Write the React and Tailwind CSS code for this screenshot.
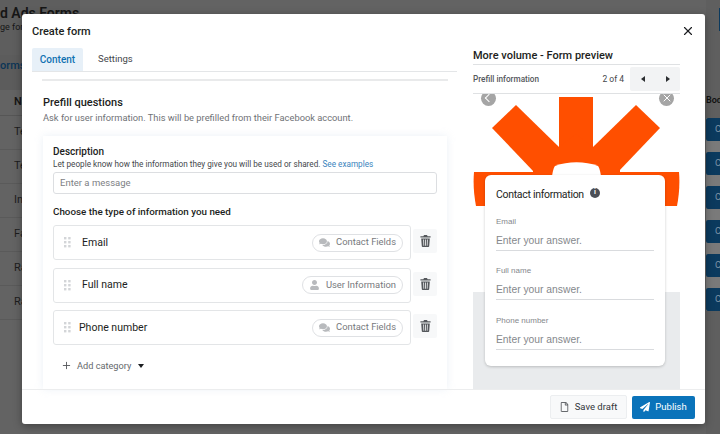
import React from "react";
import { FaComments, FaPaperPlane, FaRegFile, FaUser } from "react-icons/fa";
import { FiPlus, FiX } from "react-icons/fi";

const fields = [
  { name: "Email", tag: "Contact Fields", icon: "chat", pad: "pl-[11px]" },
  { name: "Full name", tag: "User Information", icon: "user", pad: "pl-[11px]" },
  { name: "Phone number", tag: "Contact Fields", icon: "chat", pad: "pl-[8px]" },
];

const previewFields = ["Email", "Full name", "Phone number"];
const tableRows = ["Te", "Te", "In", "Fa", "Ra", "Ra"];

function DragHandle() {
  return (
    <svg width="7" height="11" viewBox="0 0 7 11" fill="#d3d5d8">
      <rect x="0" y="0" width="2.4" height="2.4" />
      <rect x="4.2" y="0" width="2.4" height="2.4" />
      <rect x="0" y="4" width="2.4" height="2.4" />
      <rect x="4.2" y="4" width="2.4" height="2.4" />
      <rect x="0" y="8" width="2.4" height="2.4" />
      <rect x="4.2" y="8" width="2.4" height="2.4" />
    </svg>
  );
}

function TrashIcon() {
  return (
    <svg width="11" height="12" viewBox="0 0 11 12" fill="#55585c">
      <path d="M4 0 H7 L7.6 1.2 H10.6 V2.6 H0.4 V1.2 H3.4 Z" />
      <path d="M1.2 3.4 H9.8 L9.2 11.2 C9.2 11.7 8.8 12 8.4 12 H2.6 C2.2 12 1.8 11.7 1.8 11.2 Z M3.2 4.6 L3.5 10.8 H4.2 L4 4.6 Z M5.1 4.6 V10.8 H5.9 V4.6 Z M7 4.6 L6.8 10.8 H7.5 L7.8 4.6 Z" fillRule="evenodd" />
    </svg>
  );
}

function FieldRow({ name, tag, icon, pad }) {
  return (
    <div className="flex items-start">
      <div className="flex h-[35px] w-[358px] shrink-0 items-center rounded-[3px] border border-[#e3e5e7] pl-[10px] pr-[7px]">
        <DragHandle />
        <span className={`${pad} text-[10.5px] text-[#1c1e21]`}>{name}</span>
        <div className="ml-auto flex h-[18px] items-center gap-[6px] rounded-full border border-[#dfe1e4] px-[6px] text-[9.4px] text-[#77797d]">
          {icon === "chat" ? (
            <FaComments className="h-[11px] w-[11px] text-[#b8babd]" />
          ) : (
            <FaUser className="h-[10px] w-[11px] text-[#b8babd]" />
          )}
          {tag}
        </div>
      </div>
      <div className="ml-[2px] mt-[4px] flex h-[24px] w-[24px] shrink-0 items-center justify-center rounded-[2px] bg-[#f7f8f9]">
        <TrashIcon />
      </div>
    </div>
  );
}

function Preview() {
  return (
    <div className="relative h-[296px] overflow-hidden bg-[#e9ebed]">
      <div className="h-[198px] bg-white" />
      <svg className="absolute left-0 top-0" width="207" height="198" viewBox="0 0 207 198">
        <g fill="#ff4f00">
          <rect x="86" y="3" width="34" height="80" />
          <polygon points="43,11 19,34 61,78 86,53" />
          <polygon points="163,11 187,34 145,78 120,53" />
          <polygon points="60,78 147,78 147,53 120,53 103,40 86,53 60,53" />
          <path d="M1 78 H206 C207 90 206 102 204 112 H3 C1 102 0 90 1 78 Z" />
        </g>
        <path d="M79 82 C80 76 81 73 82 72 C95 67 112 67 125 72 C126 73 127 76 128 82 Z" fill="#fff" />
      </svg>
      <div className="absolute -top-[3px] left-[8px] flex h-[15px] w-[15px] items-center justify-center rounded-full bg-[#a5a5a5]">
        <span className="h-[6px] w-[6px] rotate-45 border-b border-l border-white" />
      </div>
      <div className="absolute -top-[3px] right-[6px] flex h-[15px] w-[15px] items-center justify-center rounded-full bg-[#a5a5a5]">
        <FiX className="h-[12px] w-[12px] text-white" />
      </div>
      <div className="absolute left-[12px] top-[81px] h-[191px] w-[180px] rounded-[6px] bg-white px-[11px] pt-[13px] shadow-[0_1px_3px_rgba(0,0,0,0.2)]">
        <div className="flex items-start gap-[6px]">
          <span className="text-[10.5px] leading-[14px] tracking-[-0.3px] text-[#1c1e21]">Contact information</span>
          <span className="flex h-[10px] w-[10px] items-center justify-center rounded-full bg-[#4b4f56] text-[7px] font-bold leading-none text-white">
            i
          </span>
        </div>
        <div className="mt-[15px] flex flex-col gap-[15.5px]">
          {previewFields.map((label) => (
            <div key={label}>
              <div className="font-['Liberation_Sans',sans-serif] text-[8px] leading-[10px] text-[#85888d]">{label}</div>
              <div className="mt-[7px] h-[17px] border-b border-[#d9dbde] font-['Liberation_Sans',sans-serif] text-[10.3px] leading-[14px] text-[#85888c]">
                Enter your answer.
              </div>
            </div>
          ))}
        </div>
      </div>
    </div>
  );
}

function Modal() {
  return (
    <div className="absolute left-[22px] top-[14px] flex h-[410px] w-[683px] flex-col overflow-hidden rounded-[3px] bg-white shadow-[0_2px_8px_rgba(0,0,0,0.35)]">
      <FiX className="absolute right-[10px] top-[10px] h-[14px] w-[14px] text-[#1c1e21]" />
      <div className="flex min-h-0 flex-1">
        <div className="flex w-[435px] flex-col pl-[10px]">
          <h1 className="pt-[11px] text-[11px] font-medium leading-[13px] text-[#1c1e21]">Create form</h1>
          <div className="mt-[10px] flex h-[24px] items-stretch border-b border-[#e4e6e8]">
            <div className="flex w-[51px] items-center justify-center rounded-t-[2px] bg-[#e7f0f8] text-[10px] font-medium text-[#1070b2]">
              Content
            </div>
            <div className="ml-[15px] flex items-center text-[9.5px] text-[#44474b]">Settings</div>
          </div>
          <div className="ml-[10px] mr-[9px] mt-[7px] h-[2px] bg-[#e9eaeb]" />
          <h2 className="ml-[11px] mt-[15px] text-[11px] font-medium leading-[14px] text-[#1c1e21]">Prefill questions</h2>
          <p className="ml-[11px] mt-[1px] text-[9.3px] leading-[14px] text-[#6f7276]">
            Ask for user information. This will be prefilled from their Facebook account.
          </p>
          <div className="ml-[11px] mr-[10px] mt-[11px] flex-1 bg-white px-[10px] pt-[10px] shadow-[0_0_8px_rgba(190,205,225,0.3)]">
            <h3 className="text-[10px] font-medium leading-[12px] text-[#1c1e21]">Description</h3>
            <p className="mt-[1px] text-[8.2px] leading-[11px] text-[#44474b]">
              Let people know how the information they give you will be used or shared.{" "}
              <span className="text-[#3b84bd]">See examples</span>
            </p>
            <div className="mt-[2px] flex h-[22px] w-[384px] items-center rounded-[3px] border border-[#dcdee1] px-[6px] text-[9.5px] text-[#7d8084]">
              Enter a message
            </div>
            <h3 className="mt-[11px] text-[9.8px] font-medium leading-[13px] text-[#1c1e21]">
              Choose the type of information you need
            </h3>
            <div className="mt-[7px] flex flex-col gap-[7.5px]">
              {fields.map((f) => (
                <FieldRow key={f.name} {...f} />
              ))}
            </div>
            <div className="mt-[14px] flex items-center pl-[8px] text-[9.2px] text-[#66696d]">
              <FiPlus className="h-[11px] w-[11px] text-[#55585c]" />
              <span className="ml-[5px]">Add category</span>
              <span className="ml-[7px] h-0 w-0 border-x-[3.5px] border-t-[4px] border-x-transparent border-t-[#1c1e21]" />
            </div>
          </div>
        </div>
        <div className="ml-[16px] flex w-[207px] flex-col pt-[35px]">
          <h2 className="border-b border-[#dfe1e3] pb-[2px] text-[11px] font-medium leading-[13px] text-[#1c1e21]">
            More volume - Form preview
          </h2>
          <div className="flex h-[29px] items-center border-b border-[#dfe1e3]">
            <span className="text-[8.2px] font-medium text-[#55585c]">Prefill information</span>
            <span className="ml-auto text-[8.5px] text-[#44474b]">2 of 4</span>
            <div className="ml-[6px] flex h-[24px] w-[50px] items-center justify-around rounded-[2px] bg-[#f2f3f4]">
              <span className="h-0 w-0 border-y-[3px] border-r-[4px] border-y-transparent border-r-[#2b2d30]" />
              <span className="h-0 w-0 border-y-[3px] border-l-[4px] border-y-transparent border-l-[#2b2d30]" />
            </div>
          </div>
          <Preview />
        </div>
      </div>
      <div className="flex h-[35px] shrink-0 items-center justify-end gap-[5px] border-t border-[#ecedee] pr-[10px]">
        <div className="flex h-[24px] w-[77px] items-center justify-center gap-[6px] rounded-[2px] border border-[#eceef0] bg-[#f8f9fa] text-[9.5px] text-[#33363a]">
          <FaRegFile className="h-[10px] w-[9px] text-[#66696d]" />
          Save draft
        </div>
        <div className="flex h-[23px] w-[63px] items-center justify-center gap-[5px] rounded-[2px] bg-[#0a73ba] text-[9.5px] text-white">
          <FaPaperPlane className="h-[10px] w-[10px]" />
          Publish
        </div>
      </div>
    </div>
  );
}

export default function App() {
  const blueRows = [0, 1, 2, 3, 4, 5];
  return (
    <div className="relative flex h-[434px] w-[720px] justify-between overflow-hidden bg-[#636363] font-['Roboto',sans-serif]">
      <div className="w-[80px] text-[11px] text-[#161616]">
        <div className="flex h-[55px] flex-col bg-[#5e5e5e]">
          <div className="whitespace-nowrap pt-[5px] text-[14px] font-semibold leading-[16px]">d Ads Forms</div>
          <div className="mt-[1px] whitespace-nowrap text-[9px] leading-[11px]">ge for</div>
        </div>
        <div className="h-[35px] bg-[#5c5c5c] pt-[4px] font-medium leading-[14px] text-[#0b3557]">orms</div>
        <div className="flex h-[26px] items-center border-b border-[#565656] pl-[14px] font-semibold">Na</div>
        {tableRows.map((t, i) => (
          <div key={i} className="flex h-[34px] items-center border-b border-[#5a5a5a] pl-[14px] text-[#1d1d1d]">
            {t}
          </div>
        ))}
      </div>
      <div className="w-[14px] bg-[#5f5f5f]">
        <div className="ml-[13px] mt-[8px] h-[23px] bg-[#0b3a5e]" />
        <div className="mt-[62px] whitespace-nowrap text-[9px] font-semibold leading-[14px] text-[#111]">Bod</div>
        <div className="mt-[11px] flex flex-col gap-[11px] bg-[#7a7a7a]">
          {blueRows.map((r) => (
            <div key={r} className="flex h-[23px] items-center rounded-l-[2px] bg-[#0b3a5e] pl-[9px] text-[9px] text-[#7f95a8]">
              C
            </div>
          ))}
        </div>
      </div>
      <Modal />
    </div>
  );
}
